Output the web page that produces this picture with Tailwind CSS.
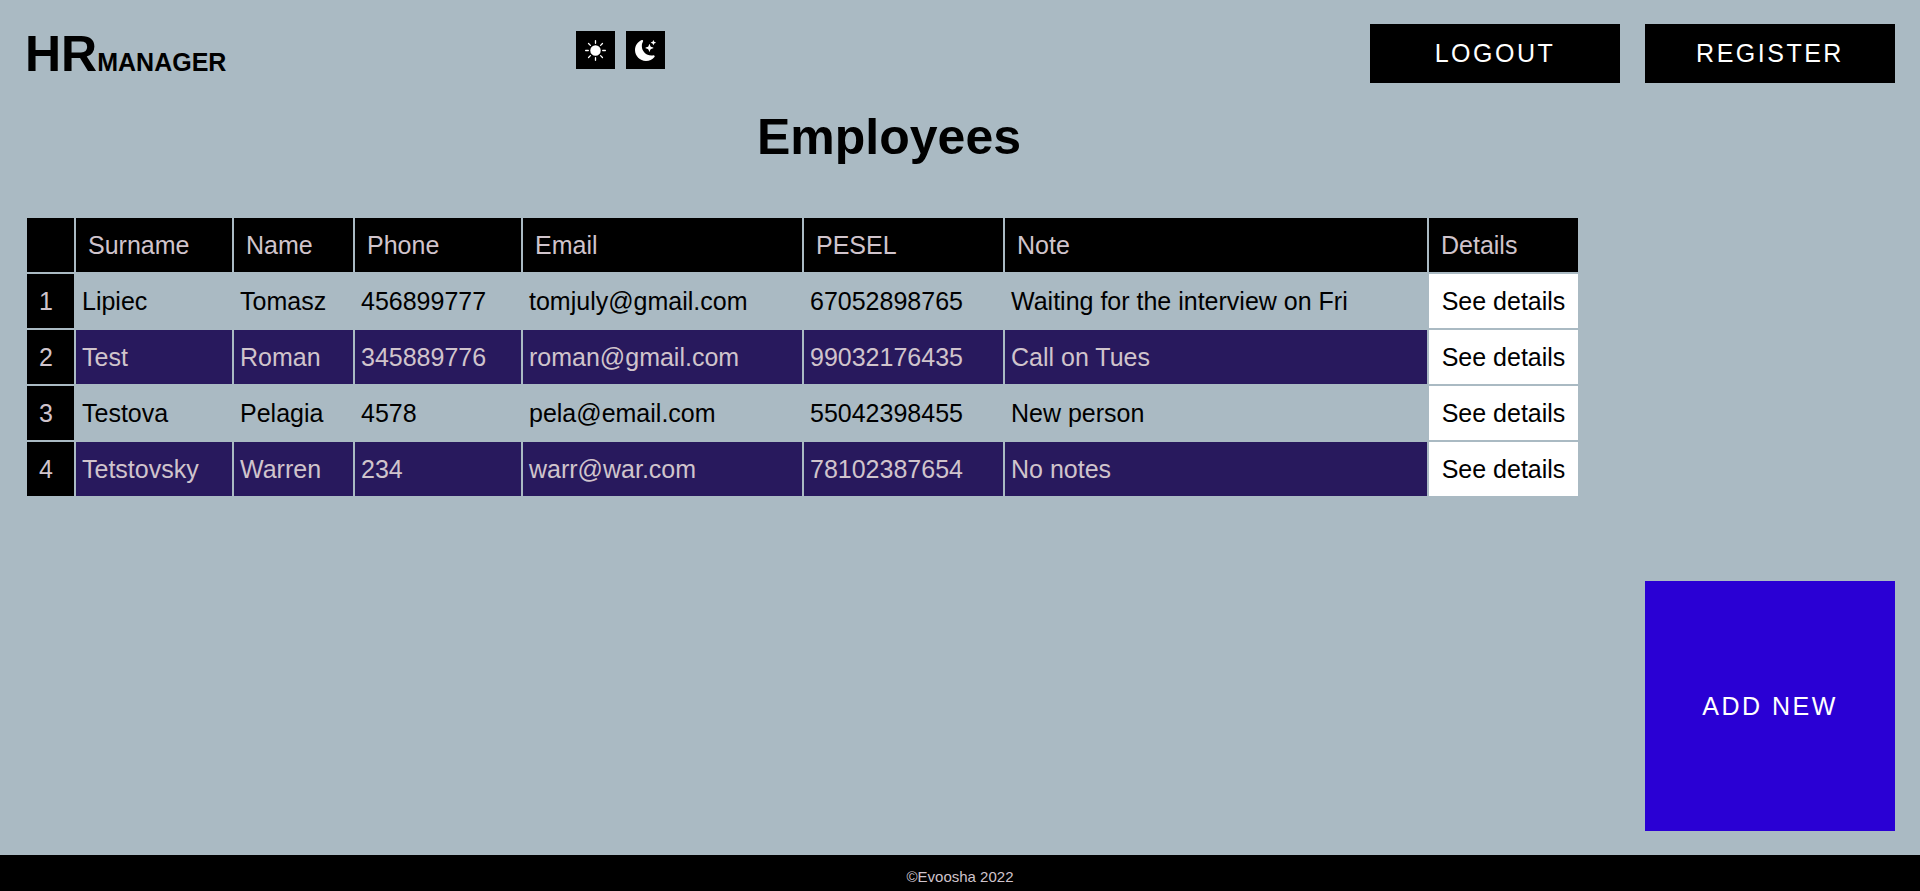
<!DOCTYPE html>
<html lang="en">
<head>
<meta charset="utf-8">
<meta name="viewport" content="width=device-width, initial-scale=1">
<title>HR Manager</title>
<script src="https://cdn.jsdelivr.net/npm/@tailwindcss/browser@4"></script>
</head>
<body class="flex min-h-screen flex-col bg-[#aabac3] font-['Liberation_Sans',Arial,sans-serif] text-[25px] leading-[28px] text-black">
  <header class="flex h-[107px] items-start pt-6 pr-[25px]">
    <div class="w-[576px] shrink-0 pl-[25px]">
      <a href="#" class="block text-[50px] leading-[60px] font-bold">HR<span class="text-[25px] leading-none">MANAGER</span></a>
    </div>
    <div class="flex flex-1 gap-[11px] pt-[7px]">
      <button type="button" aria-label="Light theme" class="flex h-[38px] w-[39px] items-center justify-center bg-black text-white">
        <svg class="size-[21px]" viewBox="0 0 16 16" fill="currentColor" aria-hidden="true"><path d="M12 8a4 4 0 1 1-8 0 4 4 0 0 1 8 0zM8 0a.5.5 0 0 1 .5.5v2a.5.5 0 0 1-1 0v-2A.5.5 0 0 1 8 0zm0 13a.5.5 0 0 1 .5.5v2a.5.5 0 0 1-1 0v-2A.5.5 0 0 1 8 13zm8-5a.5.5 0 0 1-.5.5h-2a.5.5 0 0 1 0-1h2a.5.5 0 0 1 .5.5zM3 8a.5.5 0 0 1-.5.5h-2a.5.5 0 0 1 0-1h2A.5.5 0 0 1 3 8zm10.657-5.657a.5.5 0 0 1 0 .707l-1.414 1.415a.5.5 0 1 1-.707-.708l1.414-1.414a.5.5 0 0 1 .707 0zm-9.193 9.193a.5.5 0 0 1 0 .707L3.05 13.657a.5.5 0 0 1-.707-.707l1.414-1.414a.5.5 0 0 1 .707 0zm9.193 2.121a.5.5 0 0 1-.707 0l-1.414-1.414a.5.5 0 0 1 .707-.707l1.414 1.414a.5.5 0 0 1 0 .707zM4.464 4.465a.5.5 0 0 1-.707 0L2.343 3.05a.5.5 0 1 1 .707-.707l1.414 1.414a.5.5 0 0 1 0 .708z"/></svg>
      </button>
      <button type="button" aria-label="Dark theme" class="flex h-[38px] w-[39px] items-center justify-center bg-black text-white">
        <svg class="size-[21px]" viewBox="0 0 16 16" fill="currentColor" aria-hidden="true"><path d="M6 .278a.768.768 0 0 1 .08.858 7.208 7.208 0 0 0-.878 3.46c0 4.021 3.278 7.277 7.318 7.277.527 0 1.04-.055 1.533-.16a.787.787 0 0 1 .81.316.733.733 0 0 1-.031.893A8.349 8.349 0 0 1 8.344 16C3.734 16 0 12.286 0 7.71 0 4.266 2.114 1.312 5.124.06A.752.752 0 0 1 6 .278z"/><path d="M10.794 3.148a.217.217 0 0 1 .412 0l.387 1.162c.173.518.579.924 1.097 1.097l1.162.387a.217.217 0 0 1 0 .412l-1.162.387a1.734 1.734 0 0 0-1.097 1.097l-.387 1.162a.217.217 0 0 1-.412 0l-.387-1.162A1.734 1.734 0 0 0 9.31 6.593l-1.162-.387a.217.217 0 0 1 0-.412l1.162-.387a1.734 1.734 0 0 0 1.097-1.097l.387-1.162zM13.863.099a.145.145 0 0 1 .274 0l.258.774c.115.346.386.617.732.732l.774.258a.145.145 0 0 1 0 .274l-.774.258a1.156 1.156 0 0 0-.732.732l-.258.774a.145.145 0 0 1-.274 0l-.258-.774a1.156 1.156 0 0 0-.732-.732l-.774-.258a.145.145 0 0 1 0-.274l.774-.258c.346-.115.617-.386.732-.732L13.863.1z"/></svg>
      </button>
    </div>
    <div class="flex gap-[25px]">
      <button type="button" class="h-[59px] w-[250px] bg-black pb-[2px] tracking-widest text-white">LOGOUT</button>
      <button type="button" class="h-[59px] w-[250px] bg-black pb-[2px] tracking-widest text-white">REGISTER</button>
    </div>
  </header>

  <main class="flex flex-1 flex-col">
    <h1 class="mb-[49px] pr-[142px] text-center text-[50px] leading-[60px] font-bold">Employees</h1>
    <div class="flex flex-1 justify-between px-[25px]">
      <div class="flex-1 pr-[65px]">
        <table class="w-full table-fixed border-separate border-spacing-[2px] text-left">
          <colgroup>
            <col class="w-[47px]"><col class="w-[156px]"><col class="w-[119px]"><col class="w-[166px]"><col class="w-[279px]"><col class="w-[199px]"><col><col class="w-[149px]">
          </colgroup>
          <thead>
            <tr class="h-[54px] bg-black text-[#d0c4cc] *:px-3 *:font-normal">
              <td></td><th scope="col">Surname</th><th scope="col">Name</th><th scope="col">Phone</th><th scope="col">Email</th><th scope="col">PESEL</th><th scope="col">Note</th><th scope="col">Details</th>
            </tr>
          </thead>
          <tbody>
            <tr class="h-[54px]">
              <th scope="row" class="bg-black px-3 font-normal text-[#d0c4cc]">1</th>
              <td class="px-[6px]">Lipiec</td><td class="px-[6px]">Tomasz</td><td class="px-[6px]">456899777</td><td class="px-[6px]">tomjuly@gmail.com</td><td class="px-[6px]">67052898765</td><td class="px-[6px]">Waiting for the interview on Fri</td>
              <td class="bg-white text-center"><a href="#" class="whitespace-nowrap">See details</a></td>
            </tr>
            <tr class="h-[54px] bg-[#28195d] text-[#d0c4cc]">
              <th scope="row" class="bg-black px-3 font-normal">2</th>
              <td class="px-[6px]">Test</td><td class="px-[6px]">Roman</td><td class="px-[6px]">345889776</td><td class="px-[6px]">roman@gmail.com</td><td class="px-[6px]">99032176435</td><td class="px-[6px]">Call on Tues</td>
              <td class="bg-white text-center text-black"><a href="#" class="whitespace-nowrap">See details</a></td>
            </tr>
            <tr class="h-[54px]">
              <th scope="row" class="bg-black px-3 font-normal text-[#d0c4cc]">3</th>
              <td class="px-[6px]">Testova</td><td class="px-[6px]">Pelagia</td><td class="px-[6px]">4578</td><td class="px-[6px]">pela@email.com</td><td class="px-[6px]">55042398455</td><td class="px-[6px]">New person</td>
              <td class="bg-white text-center"><a href="#" class="whitespace-nowrap">See details</a></td>
            </tr>
            <tr class="h-[54px] bg-[#28195d] text-[#d0c4cc]">
              <th scope="row" class="bg-black px-3 font-normal">4</th>
              <td class="px-[6px]">Tetstovsky</td><td class="px-[6px]">Warren</td><td class="px-[6px]">234</td><td class="px-[6px]">warr@war.com</td><td class="px-[6px]">78102387654</td><td class="px-[6px]">No notes</td>
              <td class="bg-white text-center text-black"><a href="#" class="whitespace-nowrap">See details</a></td>
            </tr>
          </tbody>
        </table>
      </div>
      <button type="button" class="mb-6 size-[250px] shrink-0 self-end bg-[#2a00d4] tracking-widest text-white">ADD NEW</button>
    </div>
  </main>

  <footer class="bg-black pt-3 pb-1 text-center text-[15px] leading-[20px] text-[#d0c4cc]">©Evoosha 2022</footer>
</body>
</html>
